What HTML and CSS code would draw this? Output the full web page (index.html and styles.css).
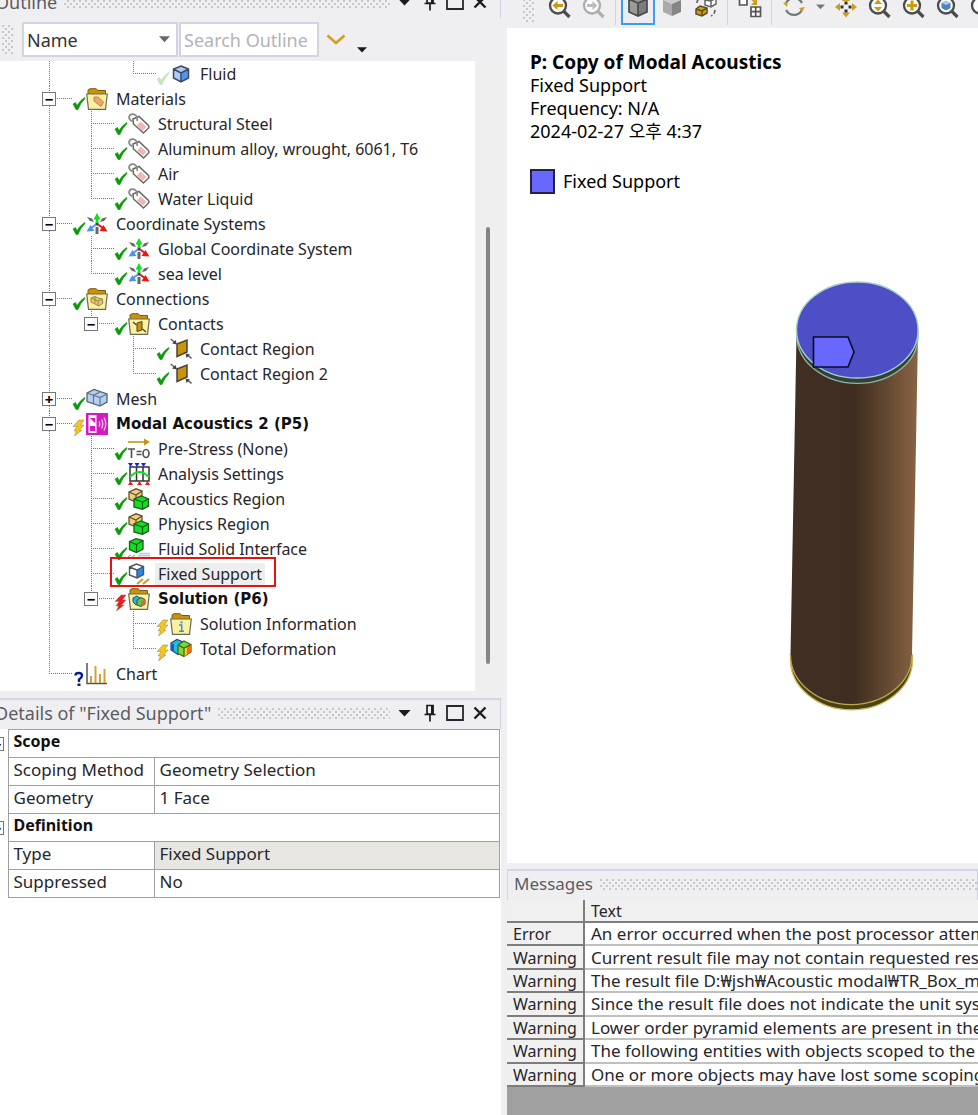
FILE: index.html
```html
<!DOCTYPE html>
<html lang="en">
<head>
<meta charset="utf-8">
<title>Modal Acoustics</title>
<link rel="stylesheet" href="styles.css">
</head>
<body>
<svg class="defs" aria-hidden="true">
  <defs>
    <symbol id="check" viewBox="0 0 14 22"><path d="M1 15 L3.500 13.500 L5 16.500 Q8 11.500 12.500 8.500 L13 9.500 Q8.500 14 6 20.500 L4 20.500 Z" fill="#0a9a0a" stroke="#0a9a0a" stroke-width=".6"/></symbol>
    <symbol id="bolt" viewBox="0 0 14 22"><path d="M7 6 L12 6 L8.500 11 L12 11 L7.500 16 L10 16 L2.500 22 L4.500 17 L2 17 L5 12.500 L1 12.500 Z" fill="currentColor" stroke="#8a8060" stroke-width=".5"/></symbol>
    <symbol id="ask" viewBox="0 0 14 22"><path d="M3.500 11.500 Q3.500 9 6.500 9 Q10 9 10 11.500 Q10 13.500 7 15.500 L7 18" fill="none" stroke="#0a1a8c" stroke-width="2.400"/><rect x="5.500" y="19.500" width="3" height="2.500" fill="#0a1a8c"/></symbol>
    <symbol id="folder" viewBox="0 0 22 22"><path d="M2 8 V2 L4 .7 H10 L12 2.500 H19.500 V8 Z" fill="#c99308" stroke="#7a5a10"/><path d="M.7 6 H21.300 L19.500 21.300 H2.500 Z" fill="#fbf1a0" stroke="#6d6a55" stroke-width="1.200"/></symbol>
    <symbol id="cube" viewBox="0 0 22 22"><path d="M11 3 L18.500 6 V15 L11 19 L3.500 15 V6 Z" fill="#a9cdf6"/><path d="M11 10 L18.500 6 V15 L11 19 Z" fill="#4f97f0"/><path d="M3.500 6 L11 10 V19 M11 10 L18.500 6 M11 3 L18.500 6 V15 L11 19 L3.500 15 V6 Z" fill="none" stroke="#414a5c" stroke-width="1.500"/></symbol>
    <symbol id="tag" viewBox="0 0 22 22"><path d="M5 6 L11 3.500 L20.500 12.500 Q21.500 14.500 20 15.500 L15.500 20 L5.500 11 Z" fill="#fff" stroke="#686868" stroke-width="1.500"/><path d="M12.500 8.500 L18.500 13.800 L14.800 17.800 L9 12.500 Z" fill="#f2b5b8"/><path d="M9 8 Q10 3 6 1.300 Q2 .5 1 4 Q1 7 4.500 8.500" fill="none" stroke="#888" stroke-width="1.700"/></symbol>
    <symbol id="materials" viewBox="0 0 22 22"><use href="#folder"/><path d="M8 9 L12 9 L17.500 14 L15 18.500 L8 13 Z" fill="#f0a868" stroke="#b98250"/></symbol>
    <symbol id="axes" viewBox="0 0 22 22"><path d="M11 11 V4" stroke="#555" stroke-width="1.300"/><path d="M9.500 9.500 h3 v3 h-3 Z" fill="#444"/><path d="M1 4 L4 8 L8 9 L6 5.500 Z M21 4 L18 8 L14 9 L16 5.500 Z M9.500 14 H12.500 V21 H9.500 Z" fill="#666"/><path d="M11 0 L14.500 6.500 H7.500 Z" fill="#0de21a"/><path d="M9.700 5 h2.600 v5 h-2.600 Z" fill="#0de21a"/><path d="M21.500 18.500 L13.500 18 L17.500 12 Z" fill="#f21414"/><path d="M12 11.500 L17 15" stroke="#f21414" stroke-width="2"/><path d="M.5 18.500 L8.500 18 L4.500 12 Z" fill="#5291ef"/><path d="M10 11.500 L5 15" stroke="#5291ef" stroke-width="2"/></symbol>
    <symbol id="connections" viewBox="0 0 22 22"><use href="#folder"/><path d="M5 10 L9 8.500 L12 10 L16 11 L17 15 L13 18 L5 14 Z" fill="#e1cd78" stroke="#9c8847"/><path d="M5 10 L12 13 L17 11 M12 13 V18 M9 8.500 V15" fill="none" stroke="#9c8847"/></symbol>
    <symbol id="contacts" viewBox="0 0 22 22"><use href="#folder"/><path d="M9 10 L14 8.500 V17 L9 18.500 Z" fill="#c99308" stroke="#4e452b"/><path d="M5 9 L8.500 12 M18 19 L14.500 16" stroke="#4e4e40" stroke-width="1.500"/></symbol>
    <symbol id="contact" viewBox="0 0 22 22"><path d="M7 6 L17 2 V14 L7 18.500 Z" fill="#c8940c" stroke="#4a4434" stroke-width="1.500"/><path d="M.7 1 L5 4.500 M21.500 20.500 L17.500 17" stroke="#666" stroke-width="1.600"/><path d="M7 6.500 L2 5.500 L5.500 2 Z M15.500 15.500 L20 16.500 L16.500 20 Z" fill="#444"/></symbol>
    <symbol id="mesh" viewBox="0 0 22 22"><path d="M1 5 L8 1.500 L21 6 V14 L14 18 L1 13.500 Z" fill="#b5cff0" stroke="#56616f" stroke-width="1.300"/><path d="M1 5 L14 9.500 L21 6 M14 9.500 V18 M7.500 7.300 V15.800 M7.500 7.300 L14.500 3.800" fill="none" stroke="#65768c" stroke-width="1.200"/></symbol>
    <symbol id="acoustic" viewBox="0 0 22 22"><path d="M0 0 H22 V22 H0 Z" fill="#d419be"/><path d="M2.500 2 H10.500 V20 H2.500 Z" fill="#fff"/><path d="M4 5 H9 V10 Z M4 13 H9 V18 H4 Z" fill="#d419be"/><path d="M13 8.500 Q14.500 11 13 13.500 M15.500 6.500 Q18 11 15.500 15.500 M18 4.500 Q21.500 11 18 17.500" fill="none" stroke="#f9c6f2" stroke-width="1.400"/></symbol>
    <symbol id="prestress" viewBox="0 0 22 22"><path d="M0 4 H18" stroke="#c69316" stroke-width="1.600"/><path d="M16 .5 L22 4 L16 7.500 Z" fill="#c69316"/><path d="M0 11 H7 M3.500 11 V20 M8.500 13.500 H13.500 M8.500 16.500 H13.500" fill="none" stroke="#555" stroke-width="1.700"/><ellipse cx="18" cy="15.500" rx="3" ry="4" fill="none" stroke="#555" stroke-width="1.700"/></symbol>
    <symbol id="analysis" viewBox="0 0 22 22"><path d="M2 4 H21 V18 H2 Z M8.500 4 V18 M15 4 V18" fill="none" stroke="#333" stroke-width="1.500"/><path d="M2 14 Q11 4 21 14" fill="none" stroke="#16df24" stroke-width="1.900"/><path d="M0 0 H5 L2.500 4 Z M6.500 0 H11.500 L9 4 Z M13 0 H18 L15.500 4 Z" fill="#1620e8"/><path d="M0 22 L2.500 18 L5 22 Z M9 22 L11.500 18 L14 22 Z M17 22 L19.500 18 L22 22 Z" fill="#e91717"/></symbol>
    <symbol id="region" viewBox="0 0 22 22"><path d="M1 4 L8 .8 L14 3 V11 L8 14 L1 11 Z" fill="#f1ce78" stroke="#5e5131" stroke-width="1.300"/><path d="M1 4 L8 7 L14 3 M8 7 V14" fill="none" stroke="#5e5131" stroke-width="1.200"/><path d="M6 11 L13 8 L20.500 11 V18 L14.500 21.300 L6 19 Z" fill="#16dd20" stroke="#145d1b" stroke-width="1.300"/><path d="M6 11 L14.500 14 L20.500 11 M14.500 14 V21" fill="none" stroke="#145d1b" stroke-width="1.200"/></symbol>
    <symbol id="interface" viewBox="0 0 22 22"><path d="M1.500 3.500 L8 0.700 L15 2.500 V11 L8.500 14.500 L1.500 11.500 Z" fill="#16dd20" stroke="#145d1b" stroke-width="1.300"/><path d="M1.500 3.500 L8.500 6.500 L15 2.500 M8.500 6.500 V14" fill="none" stroke="#145d1b" stroke-width="1.200"/><path d="M11 15.500 H22 M10 17.500 H22 M9 19.500 H22" stroke="#b8cdec" stroke-width="1.500"/><path d="M0 19 l3 -2 M4 19 l3 -2" stroke="#aaa" stroke-width="1.200"/></symbol>
    <symbol id="support" viewBox="0 0 22 22"><path d="M1.500 4 L8.500 1 L15.500 3.500 V11.500 L9 15 L1.500 12 Z" fill="#fff"/><path d="M9 7 L15.500 3.500 V11.500 L9 15 Z" fill="#2889e9"/><path d="M1.500 4 L8.500 1 L15.500 3.500 V11.500 L9 15 L1.500 12 Z M1.500 4 L9 7 V15 M9 7 L15.500 3.500" fill="none" stroke="#4d5563" stroke-width="1.400"/><path d="M9 21 L15 16 M15 21 L21 16" stroke="#c99c32" stroke-width="2"/></symbol>
    <symbol id="solution" viewBox="0 0 22 22"><use href="#folder"/><path d="M5 10 L9 8 L12 10 V16 L8 17 L5 14 Z" fill="#27b6d2" stroke="#446"/><path d="M9 12 L13 9.500 L17 11.500 V16 L13 18.500 L9 17 Z" fill="#59c843" stroke="#446"/><path d="M13 13.500 L17 11.500 V16 L13 18.500 Z" fill="#e36335"/></symbol>
    <symbol id="info" viewBox="0 0 22 22"><use href="#folder"/><path d="M9 12 H11.700 V18 M9 18.300 H14" fill="none" stroke="#3c8fe0" stroke-width="1.500"/><rect x="10.500" y="8.300" width="2" height="2" fill="#3c8fe0"/></symbol>
    <symbol id="deform" viewBox="0 0 22 22"><path d="M1 5 L7 1.500 L13 4 V13 L8 16.500 L1 12 Z" fill="#18bfdd" stroke="#234a78" stroke-width="1.200"/><path d="M1 5 L4 6.500 V14 L1 12 Z" fill="#1859d8"/><path d="M8 7 L14 3 L21 6.500 V14 L14 18.500 L8 15.500 Z" fill="#71dc32" stroke="#4d572a" stroke-width="1.200"/><path d="M14 10 L21 6.500 V14 L14 18.500 Z" fill="#f06b1b"/><path d="M14 10 L17 8.500 V16.500 L14 18.500 Z" fill="#f3cf20"/><path d="M8 7 L14 10 L21 6.500 M14 10 V18" fill="none" stroke="#4d572a" stroke-width="1.200"/></symbol>
    <symbol id="chart" viewBox="0 0 22 22"><path d="M1 0 V20.500 H21" fill="none" stroke="#555" stroke-width="1.500"/><path d="M5 20 V13 M9.500 20 V3 M14 20 V11 M18.500 20 V6" stroke="#d1a23c" stroke-width="2"/></symbol>
    <symbol id="lens" viewBox="0 0 24 24"><path d="M15.500 16 L21.500 22" stroke="currentColor" stroke-width="3.200"/><circle cx="10" cy="10.500" r="8" fill="#fbfbfc" stroke="currentColor" stroke-width="2.300"/></symbol>
    <symbol id="pin" viewBox="0 0 14 18"><path d="M4 1.500 H10 V10 H4 Z M1.500 10.500 H12.500 M7 11 V17.500" fill="none" stroke="#1b1b24" stroke-width="1.700"/><path d="M8 1 H10.500 V10 H8 Z" fill="#1b1b24"/></symbol>
    <symbol id="max" viewBox="0 0 18 16"><path d="M1 1 H17 V15 H1 Z" fill="none" stroke="#26262e" stroke-width="1.800"/></symbol>
    <symbol id="close" viewBox="0 0 14 14"><path d="M1.500 1.500 L12.500 12.500 M12.500 1.500 L1.500 12.500" stroke="#1b1b24" stroke-width="2.400"/></symbol>
    <symbol id="down" viewBox="0 0 14 8"><path d="M0 0 H14 L7 7.500 Z" fill="currentColor"/></symbol>
  </defs>
</svg>

<div class="app">
  <aside class="side">
    <section class="outline">
      <header class="caption caption-top">
        <h2>Outline</h2><span class="dots"></span>
        <button aria-label="Menu"><svg width="13" height="7"><use href="#down"/></svg></button>
        <button aria-label="Pin"><svg width="14" height="18"><use href="#pin"/></svg></button>
        <button aria-label="Maximize"><svg width="18" height="16"><use href="#max"/></svg></button>
        <button aria-label="Close"><svg width="14" height="14"><use href="#close"/></svg></button>
      </header>
      <div class="search">
        <span class="dots grip"></span>
        <div class="pick"><select aria-label="Search by"><option>Name</option></select><svg width="11" height="7"><use href="#down"/></svg></div>
        <input type="text" aria-label="Search Outline" placeholder="Search Outline">
        <button class="expand" aria-label="Expand"><svg width="20" height="12" viewBox="0 0 20 12"><path d="M1.500 1.500 L10 9 L18.500 1.500" fill="none" stroke="#cf9f21" stroke-width="2.600"/></svg></button>
        <button class="more" aria-label="More"><svg width="10" height="6"><use href="#down"/></svg></button>
      </div>
      <div class="treebox">
        <ul class="tree">
          <li><ul><li class="bare"><ul><li><div class="row"><span class="joint"></span><svg class="st faint"><use href="#check"/></svg><svg class="ic"><use href="#cube"/></svg><span class="name">Fluid</span></div></li></ul></li></ul></li>
          <li><div class="row"><span class="joint"><button aria-label="Collapse">−</button></span><svg class="st"><use href="#check"/></svg><svg class="ic"><use href="#materials"/></svg><span class="name">Materials</span></div>
            <ul>
              <li><div class="row"><span class="joint"></span><svg class="st"><use href="#check"/></svg><svg class="ic"><use href="#tag"/></svg><span class="name">Structural Steel</span></div></li>
              <li><div class="row"><span class="joint"></span><svg class="st"><use href="#check"/></svg><svg class="ic"><use href="#tag"/></svg><span class="name">Aluminum alloy, wrought, 6061, T6</span></div></li>
              <li><div class="row"><span class="joint"></span><svg class="st"><use href="#check"/></svg><svg class="ic"><use href="#tag"/></svg><span class="name">Air</span></div></li>
              <li><div class="row"><span class="joint"></span><svg class="st"><use href="#check"/></svg><svg class="ic"><use href="#tag"/></svg><span class="name">Water Liquid</span></div></li>
            </ul></li>
          <li><div class="row"><span class="joint"><button aria-label="Collapse">−</button></span><svg class="st"><use href="#check"/></svg><svg class="ic"><use href="#axes"/></svg><span class="name">Coordinate Systems</span></div>
            <ul>
              <li><div class="row"><span class="joint"></span><svg class="st"><use href="#check"/></svg><svg class="ic"><use href="#axes"/></svg><span class="name">Global Coordinate System</span></div></li>
              <li><div class="row"><span class="joint"></span><svg class="st"><use href="#check"/></svg><svg class="ic"><use href="#axes"/></svg><span class="name">sea level</span></div></li>
            </ul></li>
          <li><div class="row"><span class="joint"><button aria-label="Collapse">−</button></span><svg class="st"><use href="#check"/></svg><svg class="ic"><use href="#connections"/></svg><span class="name">Connections</span></div>
            <ul>
              <li><div class="row"><span class="joint"><button aria-label="Collapse">−</button></span><svg class="st"><use href="#check"/></svg><svg class="ic"><use href="#contacts"/></svg><span class="name">Contacts</span></div>
                <ul>
                  <li><div class="row"><span class="joint"></span><svg class="st"><use href="#check"/></svg><svg class="ic"><use href="#contact"/></svg><span class="name">Contact Region</span></div></li>
                  <li><div class="row"><span class="joint"></span><svg class="st"><use href="#check"/></svg><svg class="ic"><use href="#contact"/></svg><span class="name">Contact Region 2</span></div></li>
                </ul></li>
            </ul></li>
          <li><div class="row"><span class="joint"><button aria-label="Expand">+</button></span><svg class="st"><use href="#check"/></svg><svg class="ic"><use href="#mesh"/></svg><span class="name">Mesh</span></div></li>
          <li><div class="row"><span class="joint"><button aria-label="Collapse">−</button></span><svg class="st yellow"><use href="#bolt"/></svg><svg class="ic"><use href="#acoustic"/></svg><span class="name strong">Modal Acoustics 2 (P5)</span></div>
            <ul>
              <li><div class="row"><span class="joint"></span><svg class="st"><use href="#check"/></svg><svg class="ic"><use href="#prestress"/></svg><span class="name">Pre-Stress (None)</span></div></li>
              <li><div class="row"><span class="joint"></span><svg class="st"><use href="#check"/></svg><svg class="ic"><use href="#analysis"/></svg><span class="name">Analysis Settings</span></div></li>
              <li><div class="row"><span class="joint"></span><svg class="st"><use href="#check"/></svg><svg class="ic"><use href="#region"/></svg><span class="name">Acoustics Region</span></div></li>
              <li><div class="row"><span class="joint"></span><svg class="st"><use href="#check"/></svg><svg class="ic"><use href="#region"/></svg><span class="name">Physics Region</span></div></li>
              <li><div class="row"><span class="joint"></span><svg class="st"><use href="#check"/></svg><svg class="ic"><use href="#interface"/></svg><span class="name">Fluid Solid Interface</span></div></li>
              <li><div class="row marked"><span class="joint"></span><svg class="st"><use href="#check"/></svg><svg class="ic"><use href="#support"/></svg><span class="name chosen">Fixed Support</span></div></li>
              <li><div class="row"><span class="joint"><button aria-label="Collapse">−</button></span><svg class="st red"><use href="#bolt"/></svg><svg class="ic"><use href="#solution"/></svg><span class="name strong">Solution (P6)</span></div>
                <ul>
                  <li><div class="row"><span class="joint"></span><svg class="st yellow"><use href="#bolt"/></svg><svg class="ic"><use href="#info"/></svg><span class="name">Solution Information</span></div></li>
                  <li><div class="row"><span class="joint"></span><svg class="st yellow"><use href="#bolt"/></svg><svg class="ic"><use href="#deform"/></svg><span class="name">Total Deformation</span></div></li>
                </ul></li>
            </ul></li>
          <li><div class="row"><span class="joint"></span><svg class="st"><use href="#ask"/></svg><svg class="ic"><use href="#chart"/></svg><span class="name">Chart</span></div></li>
        </ul>
        <div class="scroll"><span class="thumb"></span></div>
      </div>
    </section>

    <section class="details">
      <header class="caption">
        <h2>Details of "Fixed Support"</h2><span class="dots"></span>
        <button aria-label="Menu"><svg width="13" height="7"><use href="#down"/></svg></button>
        <button aria-label="Pin"><svg width="14" height="18"><use href="#pin"/></svg></button>
        <button aria-label="Maximize"><svg width="18" height="16"><use href="#max"/></svg></button>
        <button aria-label="Close"><svg width="14" height="14"><use href="#close"/></svg></button>
      </header>
      <table class="props">
        <colgroup><col class="c0"><col class="c1"><col></colgroup>
        <tbody>
          <tr><td class="fold"><button aria-label="Collapse">−</button></td><th colspan="2">Scope</th></tr>
          <tr><td class="fold"></td><td>Scoping Method</td><td>Geometry Selection</td></tr>
          <tr><td class="fold"></td><td>Geometry</td><td>1 Face</td></tr>
          <tr><td class="fold"><button aria-label="Collapse">−</button></td><th colspan="2">Definition</th></tr>
          <tr><td class="fold"></td><td>Type</td><td class="locked">Fixed Support</td></tr>
          <tr><td class="fold"></td><td>Suppressed</td><td>No</td></tr>
        </tbody>
      </table>
    </section>
  </aside>

  <main class="main">
    <nav class="bar">
      <span class="dots grip"></span>
      <button aria-label="Previous view"><svg width="24" height="24" class="dark"><use href="#lens"/><path d="M4.500 10.500 L9.500 6 V9 H15 V12 H9.500 V15 Z" fill="#c99a12"/></svg></button>
      <button aria-label="Next view"><svg width="24" height="24" class="pale"><use href="#lens"/><path d="M15.500 10.500 L10.500 6 V9 H5 V12 H10.500 V15 Z" fill="#bbb"/></svg></button>
      <i></i>
      <button class="on" aria-label="Shaded with edges"><svg width="24" height="24" viewBox="0 0 24 24"><path d="M3 4 L12 1 L21 4 V17 L12 21 L3 17 Z" fill="#9a9a9a"/><path d="M12 8 L21 4 V17 L12 21 Z" fill="#7c7c7c"/><path d="M3 4 L12 8 L21 4 M12 8 V21 M3 4 V17 L12 21 L21 17 V4 L12 1 Z" fill="none" stroke="#4a4a4a" stroke-width="1.700"/></svg></button>
      <button aria-label="Shaded"><svg width="24" height="24" viewBox="0 0 24 24"><path d="M3 5 L12 1 L21 5 L12 9 Z" fill="#ccc"/><path d="M3 5 L12 9 V21 L3 17 Z" fill="#aaa"/><path d="M12 9 L21 5 V17 L12 21 Z" fill="#858585"/></svg></button>
      <button aria-label="Switch bodies"><svg width="24" height="24" viewBox="0 0 24 24"><path d="M11 5 L15 2 L22 3 V9 L17 12 L11 10 Z M11 5 L17 6 V12 M17 6 L22 3" fill="#fff" stroke="#666" stroke-width="1.500"/><path d="M2 14 L6 11 L13 13 V18 L8 21 L2 19 Z" fill="#cf9c18" stroke="#5c4c25" stroke-width="1.500"/><path d="M2 14 L8 16 L13 13 M8 16 V21" fill="none" stroke="#5c4c25" stroke-width="1.500"/><path d="M3 8 Q3 4 7 3 M21 15 Q21 19 17 21" fill="none" stroke="#666" stroke-width="1.700" stroke-dasharray="4 2"/></svg></button>
      <i></i>
      <button aria-label="Arrange"><svg width="24" height="24" viewBox="0 0 24 24"><path d="M1.500 1 H9 V10 H1.500 Z M13 12 H22.500 V21.500 H13 Z M13 16.700 H22.500 M17.700 12 V21.500" fill="#fff" stroke="#555" stroke-width="1.700"/><path d="M12 2 L18 8" stroke="#c99a12" stroke-width="2"/><path d="M19 4 V10 H13 Z" fill="#c99a12"/></svg></button>
      <i></i>
      <button aria-label="Rotate"><svg width="24" height="24" viewBox="0 0 24 24"><path d="M4 8 A9 9 0 0 1 20 8 M20 15 A9 9 0 0 1 4 15" fill="none" stroke="#777" stroke-width="2.200"/><path d="M1 8 L6 7 L5 12 Z M17 13 L23 12 L20 17 Z" fill="#d1a021"/></svg></button>
      <button class="slim" aria-label="Rotate options"><svg width="9" height="6"><use href="#down"/></svg></button>
      <button aria-label="Pan"><svg width="24" height="24" viewBox="0 0 24 24"><path d="M12 1 L16 6 H8 Z M12 22.500 L16 17.500 H8 Z M1 12 L6 8 V16 Z M23 12 L18 8 V16 Z" fill="#cf9d19"/><path d="M10.500 6.500 h3 v3 h-3 Z M10.500 14.500 h3 v3 h-3 Z M6.500 10.500 h3 v3 h-3 Z M14.500 10.500 h3 v3 h-3 Z" fill="#333"/></svg></button>
      <button aria-label="Zoom"><svg width="24" height="24" class="dark"><use href="#lens"/><path d="M10 4.500 L14 9 H6 Z M10 16.500 L14 12 H6 Z" fill="#c99a12"/></svg></button>
      <button aria-label="Zoom in"><svg width="24" height="24" class="dark"><use href="#lens"/><path d="M10 5.500 V15.500 M5 10.500 H15" stroke="#c99a12" stroke-width="3"/></svg></button>
      <button aria-label="Zoom to fit"><svg width="24" height="24" class="dark"><use href="#lens"/><path d="M5.500 8 L10 6 L14.500 8 V13 L10 15.500 L5.500 13 Z" fill="#4f83bd"/><path d="M5.500 8 L10 10 L14.500 8 L10 6 Z" fill="#a8caeb"/></svg></button>
      <button aria-label="Magnifier"><svg width="24" height="24" class="dark"><use href="#lens"/></svg></button>
    </nav>

    <section class="view">
      <h1>P: Copy of Modal Acoustics</h1>
      <p>Fixed Support</p>
      <p>Frequency: N/A</p>
      <p>2024-02-27 오후 4:37</p>
      <div class="legend"><span class="swatch"></span>Fixed Support</div>
      <svg class="model" width="150" height="450" viewBox="780 270 150 450" role="img" aria-label="Cylinder">
        <defs><linearGradient id="skin" gradientUnits="userSpaceOnUse" x1="792" x2="917" y1="0" y2="0"><stop offset="0" stop-color="#402f22"/><stop offset=".5" stop-color="#3e2d20"/><stop offset=".75" stop-color="#624830"/><stop offset="1" stop-color="#886344"/></linearGradient></defs>
        <path d="M790.500 655 V660 A60 49 0 0 0 912.500 660 V655 Z" fill="#4b4119" stroke="#d0bd5d" stroke-width="1.300"/>
        <path d="M796.500 335 L790.500 655 A60 49 0 0 0 912 655 L918 335 Z" fill="url(#skin)"/>
        <path d="M790.500 655 A60 49 0 0 0 912 655" fill="none" stroke="#bda84c" stroke-width="1.300"/>
        <path d="M797 330 V336 A60 47 0 0 0 918 336 V330" fill="#324139" stroke="#8fb6a4" stroke-width="1.300"/>
        <ellipse cx="857.300" cy="330" rx="60.800" ry="48" fill="#4e4ec6" stroke="#a6d0c6" stroke-width="1.400"/>
        <path d="M813.500 337 H848 L854 352 L848 367 H813.500 Z" fill="#6868ff" stroke="#0b0b22" stroke-width="1.600"/>
      </svg>
    </section>

    <section class="messages">
      <header class="caption"><h2>Messages</h2><span class="dots"></span></header>
      <table class="log">
        <colgroup><col class="kind"><col></colgroup>
        <thead><tr><th></th><th>Text</th></tr></thead>
        <tbody>
          <tr><th>Error</th><td>An error occurred when the post processor attempted</td></tr>
          <tr><th>Warning</th><td>Current result file may not contain requested results</td></tr>
          <tr><th>Warning</th><td>The result file D:₩jsh₩Acoustic modal₩TR_Box_modal</td></tr>
          <tr><th>Warning</th><td>Since the result file does not indicate the unit system</td></tr>
          <tr><th>Warning</th><td>Lower order pyramid elements are present in the mesh</td></tr>
          <tr><th>Warning</th><td>The following entities with objects scoped to the</td></tr>
          <tr><th>Warning</th><td>One or more objects may have lost some scoping</td></tr>
        </tbody>
      </table>
    </section>
  </main>
</div>
</body>
</html>
```
FILE: styles.css
```css
* { box-sizing: border-box; }
body, h1, h2, p, ul { margin: 0; padding: 0; }
body {
  font-family: "Noto Sans", "Noto Sans CJK KR", sans-serif;
  font-size: 16px;
  color: #26262b;
  background: #efeff2;
}
button { border: 0; padding: 0; background: none; font: inherit; color: inherit; display: flex; align-items: center; justify-content: center; }
svg { display: block; flex: none; }
.defs { position: absolute; width: 0; height: 0; }

.app { display: grid; grid-template-columns: 501px minmax(0, 1fr); column-gap: 6px; height: 100vh; overflow: hidden; }
.side { display: flex; flex-direction: column; min-height: 0; }
.main { display: flex; flex-direction: column; min-height: 0; }

.dots {
  background-image: conic-gradient(from 270deg at 2px 2px, #c6c6cb 90deg, transparent 0), conic-gradient(from 270deg at 2px 2px, #c6c6cb 90deg, transparent 0);
  background-size: 6px 6px;
  background-position: 0 0, 3px 3px;
}
.caption { display: flex; align-items: center; height: 31px; border-top: 2px solid #d5d5e3; border-right: 1px solid #cfcfe0; padding: 0 8px 3px 0; }
.caption-top { margin-top: -13px; }
.caption h2 { font-size: 18px; font-weight: 400; line-height: 24px; color: #5c5c62; white-space: nowrap; margin: 0 7px 0 -5px; }
.caption .dots { flex: 1; height: 11px; margin-right: 2px; }
.caption button { width: 25px; height: 24px; color: #1b1b24; }

.search { display: flex; align-items: center; height: 43px; padding: 4px 0; }
.grip { width: 11px; height: 29px; }
.search .grip { margin: 0 9px 0 2px; }
.pick { display: flex; align-items: center; width: 156px; height: 35px; border: 2px solid #d3d3e4; background: #fff; color: #66666c; padding-right: 6px; }
.pick select { appearance: none; flex: 1; border: 0; background: none; font: inherit; font-size: 18px; color: #333339; padding: 0 3px; }
.search input { width: 140px; height: 35px; margin-left: 1px; border: 2px solid #d3d3e4; background: #fff; font: inherit; font-size: 18px; padding: 0 3px; }
.search input::placeholder { color: #b3b3b8; opacity: 1; }
.expand { width: 34px; height: 34px; }
.more { width: 18px; height: 14px; align-self: flex-end; color: #1b1b24; }

.treebox { display: flex; background: #fff; height: 630px; }
.tree { flex: 1; padding-left: 28px; }
.tree ul { padding-left: 42px; }
.tree li { list-style: none; position: relative; }
.tree li::before { content: ""; position: absolute; left: 21px; top: 0; width: 1px; height: 100%; background: repeating-linear-gradient(#777 0 1px, transparent 1px 2px); }
.tree li:last-child::before { height: 13px; }
.tree li.bare::before { display: none; }
.row { display: flex; align-items: center; height: 25px; position: relative; }
.joint { width: 44px; height: 25px; padding: 6px 0 0 14px; background: repeating-linear-gradient(90deg, #777 0 1px, transparent 1px 2px) 21px 12px / 23px 1px no-repeat; }
.joint button, .fold button { width: 14px; height: 14px; border: 1px solid #77777b; background: #fff; color: #000; font-size: 15px; font-weight: 700; line-height: 12px; }
.st { width: 14px; height: 22px; margin-top: 3px; }
.faint { opacity: .25; }
.yellow { color: #f4c719; }
.red { color: #ec1c1c; }
.ic { width: 22px; height: 22px; }
.name { font-size: 16px; line-height: 22px; margin-left: 5px; padding: 0 3px; white-space: nowrap; }
.strong { font-family: "DejaVu Sans", sans-serif; font-size: 15px; font-weight: 700; color: #111; }
.chosen { background: #eee; }
.marked::after { content: ""; position: absolute; left: 40px; top: -4px; width: 162px; height: 26px; border: 2px solid #e81212; }
.scroll { width: 26px; background: #efeff0; padding: 166px 0 0 11px; }
.thumb { display: block; width: 4px; height: 437px; border-radius: 2px; background: #86868a; }

.details { flex: 1; margin-top: 7px; background: #fff; overflow: hidden; }
.details .caption { background: #efeff2; }
.props { border-collapse: collapse; table-layout: fixed; width: calc(100% - 1px); font-size: 17px; }
.props .c0 { width: 8px; }
.props .c1 { width: 146px; }
.props td, .props th { height: 28px; padding: 0 0 4px 5px; border: 1px solid #a0a0a0; text-align: left; line-height: 23px; white-space: nowrap; }
.props th { color: #111; font-size: 16px; }
.props .fold { padding: 0; border-width: 0 1px 0 0; }
.props .fold button { margin-left: -10px; }
.props .locked { background: #e7e6e2; }

.bar { display: flex; align-items: center; height: 42px; margin-top: -14px; padding-left: 16px; flex: none; overflow: hidden; }
.bar .grip { margin-right: 9px; flex: none; }
.bar button { width: 34px; height: 36px; flex: none; }
.bar i { width: 1px; height: 36px; margin: 0 5px 0 4px; background: #d2d2de; flex: none; }
.bar .on { border: 2px solid #3f9bf2; background: #ebedf2; }
.bar .slim { width: 18px; color: #777; }
.dark { color: #4c4c4c; }
.pale { color: #adadad; }

.view { flex: 1; min-height: 0; overflow: hidden; background: #fff; padding: 22px 0 0 23px; color: #000; }
.view h1 { font-size: 19px; line-height: 24px; }
.view p { font-size: 18px; line-height: 23px; }
.legend { display: flex; align-items: center; gap: 8px; font-size: 18px; line-height: 23px; margin-top: 26px; }
.swatch { width: 25px; height: 25px; border: 2px solid #222244; background: #6868ff; }
.model { margin: 76px 0 0 250px; }

.messages { flex: none; margin-top: 6px; height: 246px; background: #a0a0a0; overflow: hidden; }
.messages .caption { background: #efeff2; border-left: 1px solid #d5d5e3; padding-right: 0; }
.messages .caption h2 { margin-left: 6px; font-size: 17px; }
.messages .caption .dots { margin-right: 0; }
.log { border-collapse: collapse; table-layout: fixed; width: 100%; height: 187px; font-size: 17px; }
.log .kind { width: 77px; }
.log th, .log td { padding: 1px 0 0 6px; line-height: 20px; font-weight: 400; text-align: left; white-space: nowrap; overflow: hidden; border-bottom: 2px solid #c0c0c0; background: #fff; }
.log th { background: #f0f0f0; border-bottom-color: #7d7d7d; font-size: 16px; }
.log th:first-child { border-right: 2px solid #7d7d7d; }
```
